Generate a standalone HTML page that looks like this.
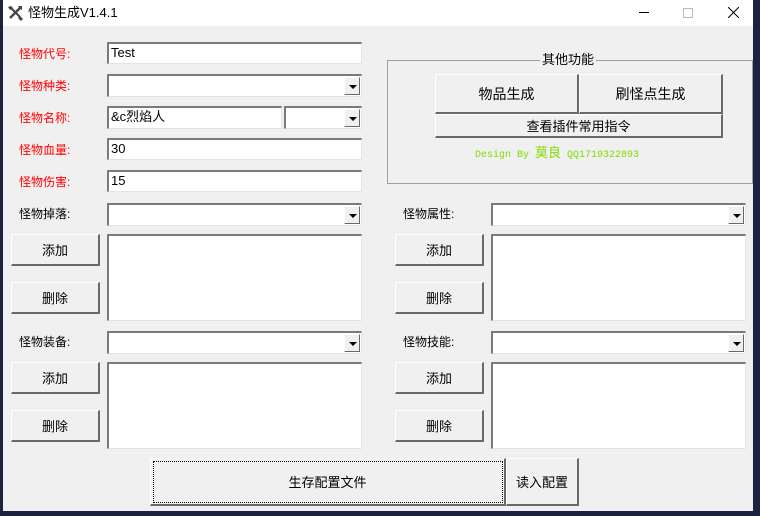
<!DOCTYPE html>
<html><head><meta charset="utf-8"><style>
*{margin:0;padding:0;box-sizing:border-box}
body{width:760px;height:516px;background:#1c2340;position:relative;overflow:hidden;font-family:"Liberation Sans","Noto Sans CJK SC",sans-serif;font-size:12px;color:#000}
.win{position:absolute;left:3px;top:0;width:750px;height:511px;background:#f0f0f0}
.tb{position:absolute;left:0;top:0;width:750px;height:26px;background:#fff}
.a{position:absolute}
.lbl{position:absolute;font-size:12px;line-height:14px}
.red{color:#f00}
.ed{position:absolute;background:#fff;border-top:2px solid #7a7a7a;border-left:2px solid #7a7a7a;border-right:1px solid #e3e3e3;border-bottom:1px solid #e3e3e3;font-size:13px;line-height:18px;padding-left:2px}
.dd{position:absolute;right:1px;top:1px;width:16px;height:18px;background:#f0f0f0;border-top:1px solid #fff;border-left:1px solid #fff;border-right:1px solid #696969;border-bottom:1px solid #696969}
.dd:after{content:"";position:absolute;left:4px;top:7px;border-left:4px solid transparent;border-right:4px solid transparent;border-top:4px solid #000}
.bt{position:absolute;background:#f0f0f0;border-top:1px solid #fff;border-left:1px solid #fff;border-right:2px solid #696969;border-bottom:2px solid #696969;display:flex;align-items:center;justify-content:center;font-size:13px}
</style></head><body>
<div class="win">
<div class="tb">
<svg class="a" style="left:4px;top:5px" width="16" height="16" viewBox="0 0 16 16"><path d="M3 13L13 3" stroke="#444" stroke-width="2.5"/><path d="M4 3L13 12" stroke="#444" stroke-width="2"/><path d="M1 2l3-1 2 2-3 2z" fill="#444"/><path d="M11 13l2-2 3 3-2 2z" fill="#444"/><path d="M11 1l4 0 0 4-2-1z" fill="#444"/></svg>
<div class="lbl" style="left:25px;top:6px;font-size:13px">怪物生成V1.4.1</div>
<div class="a" style="left:636px;top:12px;width:10px;height:1px;background:#000"></div>
<div class="a" style="left:680px;top:8px;width:10px;height:10px;border:1px solid #bbb"></div>
<svg class="a" style="left:725px;top:7px" width="11" height="11"><path d="M0 0L11 11M11 0L0 11" stroke="#000" stroke-width="1"/></svg>
</div>

<div class="lbl red" style="left:16px;top:47px">怪物代号:</div>
<div class="lbl red" style="left:16px;top:79px">怪物种类:</div>
<div class="lbl red" style="left:16px;top:111px">怪物名称:</div>
<div class="lbl red" style="left:16px;top:143px">怪物血量:</div>
<div class="lbl red" style="left:16px;top:175px">怪物伤害:</div>

<div class="ed" style="left:104px;top:42px;width:255px;height:22px">Test</div>
<div class="ed" style="left:104px;top:74px;width:255px;height:23px"><div class="dd"></div></div>
<div class="ed" style="left:104px;top:106px;width:175px;height:23px">&amp;c烈焰人</div>
<div class="ed" style="left:281px;top:106px;width:78px;height:23px"><div class="dd"></div></div>
<div class="ed" style="left:104px;top:138px;width:255px;height:22px">30</div>
<div class="ed" style="left:104px;top:170px;width:255px;height:22px">15</div>

<div class="a" style="left:384px;top:60px;width:366px;height:124px;border:1px solid #a0a0a0"></div>
<div class="lbl" style="left:537px;top:53px;background:#f0f0f0;padding:0 2px;font-size:13px">其他功能</div>
<div class="bt" style="left:432px;top:74px;width:144px;height:40px;font-size:14px">物品生成</div>
<div class="bt" style="left:576px;top:74px;width:144px;height:40px;font-size:14px">刷怪点生成</div>
<div class="bt" style="left:432px;top:114px;width:288px;height:24px">查看插件常用指令</div>
<div class="lbl" style="left:472px;top:147px;color:#7fdc00;font-family:'Liberation Mono','Noto Sans CJK SC',monospace;font-size:10px">Design By <span style="font-size:13px">莫良</span> QQ1719322893</div>

<div class="lbl" style="left:16px;top:207px">怪物掉落:</div>
<div class="ed" style="left:104px;top:203px;width:255px;height:23px"><div class="dd"></div></div>
<div class="bt" style="left:8px;top:234px;width:89px;height:32px">添加</div>
<div class="bt" style="left:8px;top:282px;width:89px;height:32px">删除</div>
<div class="ed" style="left:104px;top:234px;width:255px;height:87px"></div>

<div class="lbl" style="left:16px;top:335px">怪物装备:</div>
<div class="ed" style="left:104px;top:331px;width:255px;height:23px"><div class="dd"></div></div>
<div class="bt" style="left:8px;top:362px;width:89px;height:32px">添加</div>
<div class="bt" style="left:8px;top:410px;width:89px;height:32px">删除</div>
<div class="ed" style="left:104px;top:362px;width:255px;height:87px"></div>

<div class="lbl" style="left:400px;top:207px">怪物属性:</div>
<div class="ed" style="left:488px;top:203px;width:255px;height:23px"><div class="dd"></div></div>
<div class="bt" style="left:392px;top:234px;width:89px;height:32px">添加</div>
<div class="bt" style="left:392px;top:282px;width:89px;height:32px">删除</div>
<div class="ed" style="left:488px;top:234px;width:255px;height:87px"></div>

<div class="lbl" style="left:400px;top:335px">怪物技能:</div>
<div class="ed" style="left:488px;top:331px;width:255px;height:23px"><div class="dd"></div></div>
<div class="bt" style="left:392px;top:362px;width:89px;height:32px">添加</div>
<div class="bt" style="left:392px;top:410px;width:89px;height:32px">删除</div>
<div class="ed" style="left:488px;top:362px;width:255px;height:87px"></div>

<div class="bt" style="left:147px;top:458px;width:356px;height:48px;outline:1px dotted #000;outline-offset:-4px">生存配置文件</div>
<div class="bt" style="left:503px;top:458px;width:73px;height:48px">读入配置</div>
</div>
</body></html>
